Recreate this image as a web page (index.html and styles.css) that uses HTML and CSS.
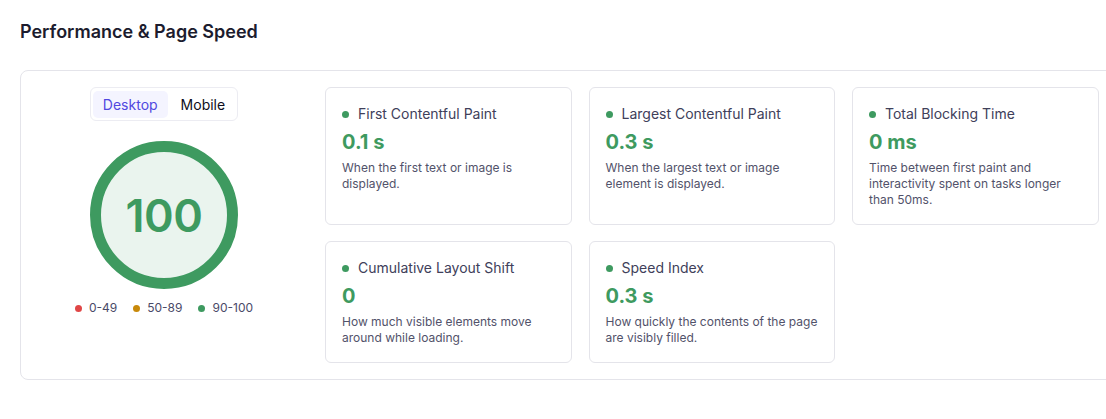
FILE: index.html
```html
<!DOCTYPE html>
<html>
<head>
<meta charset="utf-8">
<link rel="stylesheet" href="styles.css">
</head>
<body>
<section class="section">
  <h2 class="section-title">Performance &amp; Page Speed</h2>
  <div class="panel">
    <div class="score-col">
      <div class="toggle">
        <button class="toggle-btn active">Desktop</button>
        <button class="toggle-btn">Mobile</button>
      </div>
      <div class="gauge"><span class="gauge-value">100</span></div>
      <div class="legend">
        <span class="legend-item"><span class="dot dot-red"></span>0-49</span>
        <span class="legend-item"><span class="dot dot-amber"></span>50-89</span>
        <span class="legend-item"><span class="dot dot-green"></span>90-100</span>
      </div>
    </div>
    <div class="metrics">
      <div class="metric">
        <div class="metric-title"><span class="dot dot-green"></span>First Contentful Paint</div>
        <div class="metric-value">0.1 s</div>
        <p class="metric-desc">When the first text or image is displayed.</p>
      </div>
      <div class="metric">
        <div class="metric-title"><span class="dot dot-green"></span>Largest Contentful Paint</div>
        <div class="metric-value">0.3 s</div>
        <p class="metric-desc">When the largest text or image element is displayed.</p>
      </div>
      <div class="metric">
        <div class="metric-title"><span class="dot dot-green"></span>Total Blocking Time</div>
        <div class="metric-value">0 ms</div>
        <p class="metric-desc">Time between first paint and interactivity spent on tasks longer than 50ms.</p>
      </div>
      <div class="metric">
        <div class="metric-title"><span class="dot dot-green"></span>Cumulative Layout Shift</div>
        <div class="metric-value">0</div>
        <p class="metric-desc">How much visible elements move around while loading.</p>
      </div>
      <div class="metric">
        <div class="metric-title"><span class="dot dot-green"></span>Speed Index</div>
        <div class="metric-value">0.3 s</div>
        <p class="metric-desc">How quickly the contents of the page are visibly filled.</p>
      </div>
    </div>
  </div>
</section>
</body>
</html>
```

FILE: styles.css
```css
html, body {
  margin: 0;
  padding: 0;
  background: #ffffff;
  overflow: hidden;
}
body {
  font-family: Inter, "Noto Sans", "Liberation Sans", sans-serif;
  color: #1e1e30;
}
.section {
  padding: 20px 0 0 20px;
}
.section-title {
  margin: 0;
  font-size: 18px;
  line-height: 24px;
  font-weight: 600;
  color: #1c1c2e;
}
.panel {
  margin-top: 26px;
  width: 1096px;
  box-sizing: border-box;
  border: 1px solid #e4e4ea;
  border-radius: 8px;
  padding: 16px;
  display: flex;
  gap: 34px;
}
.score-col {
  width: 254px;
  flex: none;
  display: flex;
  flex-direction: column;
  align-items: center;
}
.toggle {
  display: flex;
  gap: 3px;
  padding: 3px 2px 2px;
  border: 1px solid #ececf2;
  border-radius: 6px;
}
.toggle-btn {
  font-family: inherit;
  font-size: 14px;
  line-height: 17px;
  font-weight: 400;
  padding: 5px 10px;
  border: none;
  border-radius: 5px;
  background: transparent;
  color: #0e0e20;
}
.toggle-btn.active {
  background: #f4f4ff;
  color: #5048e0;
}
.gauge {
  margin-top: 20px;
  width: 148px;
  height: 148px;
  box-sizing: border-box;
  border: 11px solid #3e9a60;
  border-radius: 50%;
  background: #eaf4ee;
  display: flex;
  align-items: center;
  justify-content: center;
}
.gauge-value {
  font-size: 45px;
  font-weight: 600;
  color: #3e9a60;
  letter-spacing: -0.5px;
}
.legend {
  margin-top: 11px;
  display: flex;
  gap: 16px;
  font-size: 12px;
  line-height: 16px;
  color: #4a4a68;
}
.legend-item {
  display: flex;
  align-items: center;
  gap: 7px;
}
.dot {
  display: inline-block;
  width: 7px;
  height: 7px;
  border-radius: 50%;
  flex: none;
}
.dot-red { background: #e04646; }
.dot-amber { background: #c8890a; }
.dot-green { background: #3e9a60; }
.metrics {
  display: grid;
  grid-template-columns: repeat(3, 246.5px);
  column-gap: 17px;
  row-gap: 16.5px;
  align-items: stretch;
}
.metric {
  border: 1px solid #e4e4ea;
  border-radius: 6px;
  padding: 16px 16px 15.5px;
}
.metric-title {
  display: flex;
  align-items: center;
  gap: 9px;
  font-size: 14px;
  line-height: 20px;
  color: #40405a;
}
.metric-value {
  margin-top: 6px;
  font-size: 20px;
  line-height: 24px;
  font-weight: 700;
  color: #3e9a60;
}
.metric-desc {
  margin: 6px 0 0;
  font-size: 12px;
  line-height: 16px;
  color: #52526a;
}
```
